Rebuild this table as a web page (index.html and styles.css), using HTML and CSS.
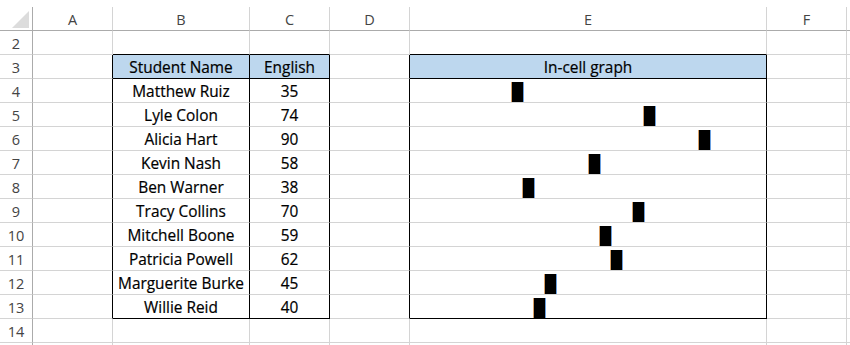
FILE: index.html
```html
<!DOCTYPE html>
<html>
<head>
<meta charset="utf-8">
<link rel="stylesheet" href="styles.css">
</head>
<body>
<div class="sheet">
  <div class="cell rh ch corner"><svg width="17" height="17" viewBox="0 0 17 17"><polygon points="17,0 17,17 0,17" fill="#dcdcdc"/></svg></div>
  <div class="cell ch">A</div><div class="cell ch">B</div><div class="cell ch">C</div><div class="cell ch">D</div><div class="cell ch">E</div><div class="cell ch">F</div><div class="cell ch last"></div>

  <div class="cell rh">2</div><div class="cell"></div><div class="cell bb"></div><div class="cell bb"></div><div class="cell"></div><div class="cell bb"></div><div class="cell"></div><div class="cell last"></div>

  <div class="cell rh">3</div><div class="cell br"></div><div class="cell th br bb">Student Name</div><div class="cell th br bb">English</div><div class="cell br"></div><div class="cell th br bb">In-cell graph</div><div class="cell"></div><div class="cell last"></div>

  <div class="cell rh">4</div><div class="cell br"></div><div class="cell br">Matthew Ruiz</div><div class="cell br">35</div><div class="cell br"></div><div class="cell br graph"><span class="bar" style="margin-left:102px"></span></div><div class="cell"></div><div class="cell last"></div>

  <div class="cell rh">5</div><div class="cell br"></div><div class="cell br">Lyle Colon</div><div class="cell br">74</div><div class="cell br"></div><div class="cell br graph"><span class="bar" style="margin-left:234px"></span></div><div class="cell"></div><div class="cell last"></div>

  <div class="cell rh">6</div><div class="cell br"></div><div class="cell br">Alicia Hart</div><div class="cell br">90</div><div class="cell br"></div><div class="cell br graph"><span class="bar" style="margin-left:289px"></span></div><div class="cell"></div><div class="cell last"></div>

  <div class="cell rh">7</div><div class="cell br"></div><div class="cell br">Kevin Nash</div><div class="cell br">58</div><div class="cell br"></div><div class="cell br graph"><span class="bar" style="margin-left:179px"></span></div><div class="cell"></div><div class="cell last"></div>

  <div class="cell rh">8</div><div class="cell br"></div><div class="cell br">Ben Warner</div><div class="cell br">38</div><div class="cell br"></div><div class="cell br graph"><span class="bar" style="margin-left:113px"></span></div><div class="cell"></div><div class="cell last"></div>

  <div class="cell rh">9</div><div class="cell br"></div><div class="cell br">Tracy Collins</div><div class="cell br">70</div><div class="cell br"></div><div class="cell br graph"><span class="bar" style="margin-left:223px"></span></div><div class="cell"></div><div class="cell last"></div>

  <div class="cell rh">10</div><div class="cell br"></div><div class="cell br">Mitchell Boone</div><div class="cell br">59</div><div class="cell br"></div><div class="cell br graph"><span class="bar" style="margin-left:190px"></span></div><div class="cell"></div><div class="cell last"></div>

  <div class="cell rh">11</div><div class="cell br"></div><div class="cell br">Patricia Powell</div><div class="cell br">62</div><div class="cell br"></div><div class="cell br graph"><span class="bar" style="margin-left:201px"></span></div><div class="cell"></div><div class="cell last"></div>

  <div class="cell rh">12</div><div class="cell br"></div><div class="cell br">Marguerite Burke</div><div class="cell br">45</div><div class="cell br"></div><div class="cell br graph"><span class="bar" style="margin-left:135px"></span></div><div class="cell"></div><div class="cell last"></div>

  <div class="cell rh">13</div><div class="cell br"></div><div class="cell br bb">Willie Reid</div><div class="cell br bb">40</div><div class="cell br"></div><div class="cell br bb graph"><span class="bar" style="margin-left:124px"></span></div><div class="cell"></div><div class="cell last"></div>

  <div class="cell rh">14</div><div class="cell"></div><div class="cell"></div><div class="cell"></div><div class="cell"></div><div class="cell"></div><div class="cell"></div><div class="cell last"></div>

  <div class="cell rh"></div><div class="cell"></div><div class="cell"></div><div class="cell"></div><div class="cell"></div><div class="cell"></div><div class="cell"></div><div class="cell last"></div>
</div>
</body>
</html>
```

FILE: styles.css
```css
html, body {
  margin: 0;
  padding: 0;
  background: #ffffff;
  overflow: hidden;
}

.sheet {
  padding-top: 7px;
  display: grid;
  grid-template-columns: 33px 80px 137px 80px 80px 357px 80px 1fr;
  grid-auto-rows: 24px;
  font-family: "Open Sans", "Liberation Sans", sans-serif;
  font-size: 15.4px;
  color: #000000;
}

.cell {
  box-sizing: border-box;
  border-right: 1px solid #d4d4d4;
  border-bottom: 1px solid #d4d4d4;
  display: flex;
  align-items: center;
  justify-content: center;
  padding-top: 2px;
  line-height: 21px;
  white-space: nowrap;
  overflow: hidden;
  -webkit-text-stroke: 0.2px currentColor;
}

.cell.last {
  border-right: none;
}

.ch {
  color: #444444;
  font-size: 14.5px;
  border-bottom-color: #ababab;
  -webkit-text-stroke: 0;
}

.rh {
  color: #444444;
  font-size: 14.5px;
  border-right-color: #ababab;
  -webkit-text-stroke: 0;
}

.corner {
  align-items: flex-start;
  justify-content: flex-start;
  padding: 4px 0 0 12px;
}

.corner svg {
  display: block;
}

.br {
  border-right-color: #000000;
}

.bb {
  border-bottom-color: #000000;
}

.th {
  background: #bdd7ee;
}

.graph {
  justify-content: flex-start;
  align-items: flex-end;
}

.bar {
  display: block;
  width: 11px;
  height: 20px;
  background: #000000;
  box-shadow: -1px 0 0 #d9a066, 1px 0 0 #6aa0e0;
}
```
